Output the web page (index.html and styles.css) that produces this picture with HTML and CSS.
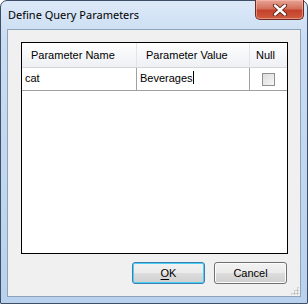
FILE: index.html
```html
<!DOCTYPE html>
<html>
<head>
	<title>Define Query Parameters</title>
	<link rel="stylesheet" href="styles.css">
</head>
<body>
<div class="window">
	<div class="titlebar">
		<span class="title">Define Query Parameters</span>
		<div class="close">
			<svg width="16" height="12" viewBox="0 0 16 12">
				<path d="M3 1.5 L13 10.5 M13 1.5 L3 10.5" stroke="#5a1d14" stroke-width="4.2" stroke-linecap="round"/>
				<path d="M3 1.5 L13 10.5 M13 1.5 L3 10.5" stroke="#ffffff" stroke-width="2.4" stroke-linecap="round"/>
			</svg>
		</div>
	</div>
	<div class="client">
		<div class="grid">
			<div class="head">
				<div class="hcell name">Parameter Name</div>
				<div class="hcell value">Parameter Value</div>
				<div class="hcell null">Null</div>
			</div>
			<div class="row">
				<div class="cell name">cat</div>
				<div class="cell value">Beverages<span class="caret"></span></div>
				<div class="cell null"><span class="check"></span></div>
			</div>
		</div>
		<div class="buttons">
			<button class="btn default"><u>O</u>K</button>
			<button class="btn">Cancel</button>
		</div>
		<div class="grip"></div>
	</div>
</div>
</body>
</html>
```

FILE: styles.css
```css
body{
	margin: 0;
	background: #ffffff;
	font-family: "Liberation Sans", Arial, sans-serif;
}
.window{
	width: 308px;
	height: 304px;
	box-sizing: border-box;
	border: 1px solid #3c4f66;
	border-radius: 7px 7px 1px 1px;
	background: linear-gradient(#dce9f8, #c9dcf2 40px, #c0d6ef 200px, #b9d1ec);
	display: flex;
	flex-direction: column;
	position: relative;
}
.titlebar{
	height: 28px;
	display: flex;
	align-items: flex-start;
	justify-content: space-between;
}
.title{
	font-family: "Noto Sans", "DejaVu Sans", sans-serif;
	font-size: 11px;
	color: #000000;
	margin: 6px 0 0 7px;
}
.close{
	width: 49px;
	height: 20px;
	margin: -1px 3px 0 0;
	box-sizing: border-box;
	border: 1px solid #6e2a22;
	border-top: none;
	border-radius: 0 0 5px 5px;
	background: linear-gradient(#e8a496, #d3705c 45%, #c4412b 55%, #cf5c3e);
	display: flex;
	align-items: center;
	justify-content: center;
	box-shadow: inset 0 0 0 1px rgba(255,200,190,0.5);
}
.client{
	flex: 1;
	margin: 0 6px 6px 6px;
	border: 1px solid #8ea3bd;
	background: #f0f0f0;
	padding: 12px 12px 12px 13px;
	display: flex;
	flex-direction: column;
	gap: 8px;
	position: relative;
}
.grid{
	flex: 1;
	border: 1px solid #000000;
	background: #ffffff;
	font-size: 11px;
}
.head, .row{
	display: flex;
}
.head{
	height: 24px;
	background: linear-gradient(#ffffff, #f6f7f9 50%, #eef0f3);
	border-bottom: 1px solid #d5d5d5;
}
.hcell, .cell{
	box-sizing: border-box;
}
.hcell{
	padding-left: 9px;
	line-height: 24px;
	border-right: 1px solid #e3e4e6;
}
.hcell.null{
	border-right: none;
	padding-left: 6px;
}
.name{
	width: 115px;
	flex: none;
}
.value{
	width: 113px;
	flex: none;
}
.null{
	flex: 1;
}
.row{
	height: 22px;
	border-bottom: 1px solid #a0a0a0;
}
.cell{
	line-height: 21px;
	padding-left: 3px;
	border-right: 1px solid #a0a0a0;
}
.cell.null{
	border-right: none;
	display: flex;
	align-items: center;
	justify-content: center;
	padding-left: 0;
}
.caret{
	display: inline-block;
	width: 1px;
	height: 13px;
	background: #000000;
	vertical-align: -2px;
}
.check{
	width: 11px;
	height: 11px;
	border: 1px solid #8f8f8f;
	background: linear-gradient(135deg, #dcdcdc, #f6f6f6);
}
.buttons{
	display: flex;
	justify-content: flex-end;
	gap: 9px;
	padding-right: 1px;
}
.btn{
	width: 73px;
	height: 22px;
	border: 1px solid #707070;
	border-radius: 3px;
	background: linear-gradient(#f2f2f2, #ebebeb 50%, #dddddd 50%, #cfcfcf);
	font-family: "Liberation Sans", Arial, sans-serif;
	font-size: 11px;
	color: #000000;
	padding: 0;
	box-shadow: inset 0 0 0 1px #fcfcfc;
}
.btn.default{
	border-color: #3c7fb1;
	box-shadow: inset 0 0 0 1px #48d0f7;
}
.btn u{
	text-decoration-thickness: 1px;
	text-underline-offset: 2px;
}
.grip{
	position: absolute;
	right: 1px;
	bottom: 1px;
	width: 9px;
	height: 9px;
	background:
		radial-gradient(circle, #b0b0b0 0.8px, transparent 1.2px) 0 0 / 3px 3px;
	clip-path: polygon(100% 0, 100% 100%, 0 100%);
}
```
